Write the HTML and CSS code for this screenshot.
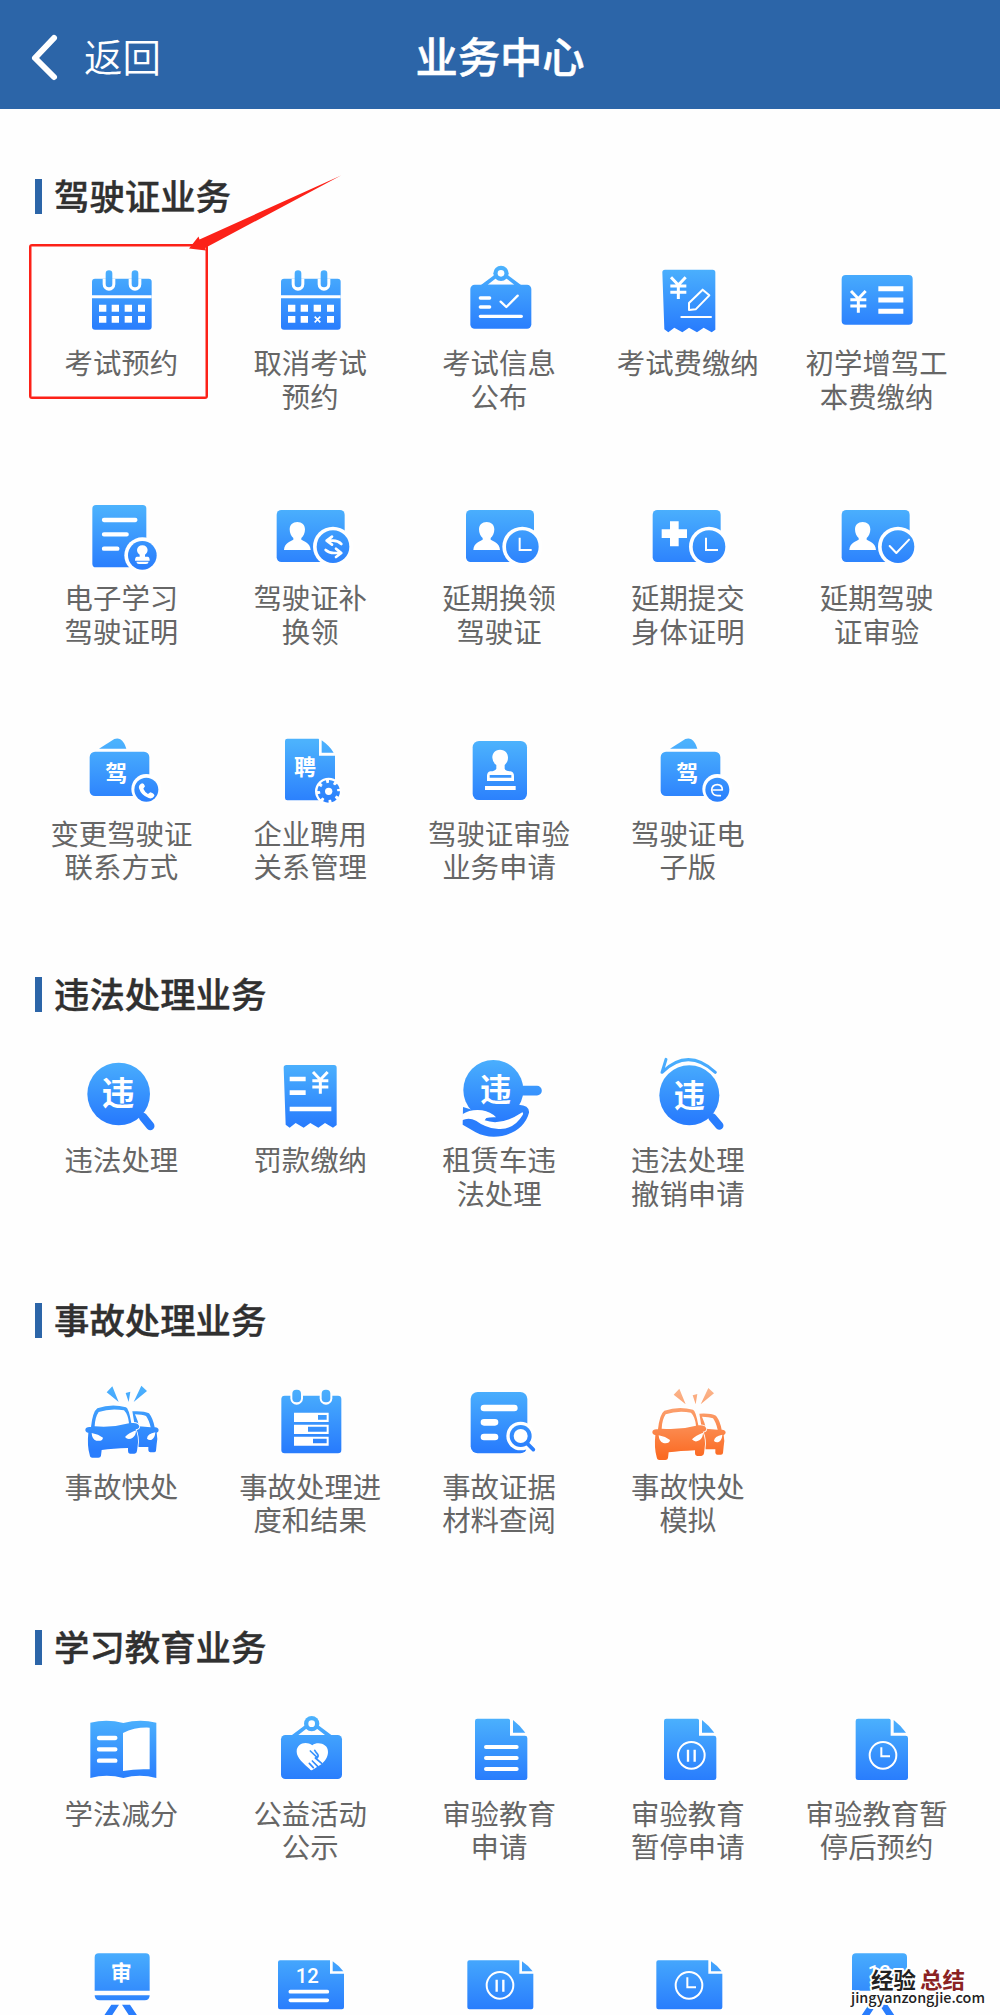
FILE: index.html
```html
<!DOCTYPE html>
<html lang="zh-CN">
<head>
<meta charset="utf-8">
<title>业务中心</title>
<link rel="stylesheet" href="styles.css">
</head>
<body>
<svg class="defs" aria-hidden="true">
  <defs>
    <linearGradient id="blue" gradientUnits="userSpaceOnUse" x1="0" y1="50" x2="0" y2="240">
      <stop offset="0" stop-color="#4cb2fd"/><stop offset="1" stop-color="#297dfd"/>
    </linearGradient>
    <linearGradient id="orange" gradientUnits="userSpaceOnUse" x1="0" y1="50" x2="0" y2="255">
      <stop offset="0" stop-color="#fbb58c"/><stop offset="1" stop-color="#fb6a22"/>
    </linearGradient>
    <g id="calendar">
      <rect x="97" y="87" width="179" height="153" rx="9"/>
      <path class="w" d="M97 137h179v9H97zM129 87h38v17a19 19 0 0 1-38 0zM207 87h38v17a19 19 0 0 1-38 0z"/>
      <rect x="138" y="62" width="20" height="51" rx="10"/><rect x="216" y="62" width="20" height="51" rx="10"/>
      <path class="w" d="M118 165h22v21h-22zM156 165h22v21h-22zM195 165h22v21h-22zM235 165h21v21h-21zM118 199h22v20h-22zM156 199h22v20h-22zM235 199h21v20h-21z"/>
    </g>
    <g id="board">
      <rect x="664" y="105" width="183" height="132" rx="13"/>
      <path d="M692 109l52-39h24l52 39zm24-4h80l-26-20h-28z" fill-rule="evenodd"/>
      <circle cx="756" cy="71" r="23"/><circle class="w" cx="756" cy="71" r="10"/>
    </g>
    <g id="person">
      <path class="w" d="M0-36c14 0 23 9 23 22 0 12-5 21-11 26v5c7 5 27 8 28 31h-80c1-23 21-26 28-31v-5c-6-5-11-14-11-26 0-13 9-22 23-22z"/>
    </g>
    <g id="yen"><path class="l" stroke-width="9" d="M-22-32l22 23 22-23M0-9v42M-24-6h48M-24 13h48"/></g>
    <g id="card">
      <rect x="0" y="62" width="204" height="156" rx="14"/>
      <circle class="w" cx="169" cy="172" r="60"/><path class="w" d="M130 219h60v12h-60z"/>
      <circle cx="169" cy="172" r="49"/>
    </g>
    <g id="wallet">
      <path d="M118 71l46-29q10-4 18 1 12 8 18 28z"/>
      <rect x="90" y="80" width="179" height="133" rx="16"/>
      <text x="170" y="169" font-size="66">驾</text>
      <circle class="w" cx="260" cy="192" r="45"/><circle cx="260" cy="194" r="36"/>
    </g>
    <g id="doc">
      <path d="M7 56H100q5 0 5 5v46h45q7 0 7 7V233q0 7-7 7H7q-7 0-7-7V63q0-7 7-7z"/>
      <path d="M114 60q22 17 37 38h-37z"/>
    </g>
    <g id="widedoc">
      <path d="M6 92H156v40h42V233q0 6-6 6H6q-6 0-6-6V98q0-6 6-6z"/><path d="M164 95q18 12 32 30h-32z"/>
    </g>
    <g id="easel">
      <path d="M0 183V83q0-12 12-12H153q12 0 12 12V183zM0 197H165q0 15-15 15H15Q0 212 0 197zM50 225H73L34 285H10zM82 225h24l40 60h-25z"/>
    </g>
    <g id="receipt"><path d="M0 68q0-8 8-8H151q8 0 8 8V240l-11 8-24-14-20 14-24-14-20 14-24-14-18 14-12-9z"/></g>
    <g id="crash">
      <path d="M158 50l-17 18 36 29zM198 70l14-4-5 31zM245 48l17 16-40 33z"/>
      <path fill-rule="evenodd" d="M218 125q35-2 50 6 12 15 17 42 10-1 12 8 0 6-6 8 4 20 0 34l-2 20q-1 5-6 5h-11q-5 0-6-6v-10h-30zM226 134q9 20 12 36l35 3q-5-22-14-34-12-5-33-5zM262 207q1-15 25-19-1 17-11 22-8 3-14-3z"/>
      <path class="wo" fill-rule="evenodd" d="M113 116q43-15 86-3 8 2 16 47 21-2 24 10 0 8-11 9 10 25 6 49l-2 16q-1 8-8 8h-13q-6 0-6-8v-9q-45 2-79 6l-2 17q-1 6-8 6H98q-7 0-8-9-8-27-4-66-9-1-9-9 1-10 17-8 5-46 19-56zM117 127q-11 16-12 43 52 5 103-9-3-27-15-39-41-7-76 5zM96 190q21 4 34 14-2 12-20 9-13-4-14-23zM196 202q11-12 33-20 0 16-11 23-13 8-22-3z"/>
    </g>
  </defs>
</svg>

<header class="nav">
  <a class="back"><svg viewBox="0 0 34 50"><path d="M27 6L8 26l19 19"/></svg><span>返回</span></a>
  <h1>业务中心</h1>
</header>

<main>
<section>
  <h2>驾驶证业务</h2>
  <div class="grid">
    <div class="item"><svg viewBox="34 -11 300 300"><use href="#calendar"/><path class="w" d="M195 199h22v20h-22z"/></svg><p>考试预约</p></div>
    <div class="item"><svg viewBox="34 -11 300 300"><use href="#calendar"/><path class="l" stroke-width="5" d="M198 201l17 17m0-17l-17 17"/></svg><p>取消考试<br>预约</p></div>
    <div class="item"><svg viewBox="600 -11 300 300"><use href="#board"/><path class="l r" stroke-width="10" d="M694 145h28M694 172h28M694 200h123"/><path class="l r" stroke-width="7" d="M755 156l17 16 34-34"/></svg><p>考试信息<br>公布</p></div>
    <div class="item"><svg viewBox="413 -11 300 300"><use href="#receipt" x="486"/><use href="#yen" x="534" y="115"/><path class="l r" stroke-width="6" d="M566 160l41-40 20 17-41 42-20 2zM543 202h89"/></svg><p>考试费缴纳</p></div>
    <div class="item"><svg viewBox="980 -11 300 300"><rect x="1024" y="76" width="213" height="149" rx="12"/><use href="#yen" x="1074" y="156"/><path class="l" stroke-width="15" d="M1134 117h75M1134 151h75M1134 185h75"/></svg><p>初学增驾工<br>本费缴纳</p></div>

    <div class="item"><svg viewBox="34 -25 300 300"><rect x="98" y="47" width="162" height="187" rx="11"/><path class="l r" stroke-width="13" d="M133 92h94M133 135h68M133 178h40"/><circle class="w" cx="248" cy="198" r="54"/><circle cx="248" cy="198" r="43"/><path class="w" d="M248 168c19 0 20 22 8 28v6h8q6 0 6 12h-44q0-12 6-12h8v-6c-12-6-11-28 8-28zM230 217h37q-1 7-8 7h-21q-7 0-8-7z"/></svg><p>电子学习<br>驾驶证明</p></div>
    <div class="item"><svg viewBox="601 -25 300 300"><use href="#card" x="651"/><use href="#person" x="713" y="134"/><path class="l r" stroke-width="8" d="M845 164q-10-10-25-10h-19M817 142l-16 12 16 12M798 182q10 9 25 9h20M829 178l16 13-16 12"/></svg><p>驾驶证补<br>换领</p></div>
    <div class="item"><svg viewBox="1167 -25 300 300"><use href="#card" x="1218"/><use href="#person" x="1280" y="134"/><path class="l" stroke-width="6" d="M1379 145v37h36"/></svg><p>延期换领<br>驾驶证</p></div>
    <div class="item"><svg viewBox="413 -25 300 300"><use href="#card" x="457"/><path class="w" d="M509 96h26v24h25v26h-25v25h-26v-25h-25v-26h25z"/><path class="l" stroke-width="6" d="M617 145v37h36"/></svg><p>延期提交<br>身体证明</p></div>
    <div class="item"><svg viewBox="980 -25 300 300"><use href="#card" x="1024"/><use href="#person" x="1087" y="134"/><path class="l r" stroke-width="6" d="M1168 170l20 21 38-40"/></svg><p>延期驾驶<br>证审验</p></div>

    <div class="item"><svg viewBox="34 -24 300 300"><use href="#wallet"/><path class="w" d="M244 176q8-4 12 8l-5 7q5 11 14 16l7-5q14 5 12 11-6 10-17 6-22-7-29-29-2-9 6-14z"/></svg><p>变更驾驶证<br>联系方式</p></div>
    <div class="item"><svg viewBox="601 -24 300 300"><path d="M683 41h93q2 0 2 3v48h48V220q0 6-7 6H683q-7 0-7-7V48q0-7 7-7zM786 46q23 16 36 37h-36z"/><text x="736" y="149" font-size="66">聘</text><circle class="w" cx="807" cy="199" r="41"/><circle cx="807" cy="199" r="26"/><circle class="ring b" cx="807" cy="199" r="28" stroke-dasharray="14 8"/><circle class="w" cx="807" cy="199" r="11"/></svg><p>企业聘用<br>关系管理</p></div>
    <div class="item"><svg viewBox="1167 -24 300 300"><rect x="1238" y="48" width="163" height="177" rx="19"/><path class="w" fill-rule="evenodd" d="M1320 74c17 0 24 12 24 24 0 13-7 18-10 22v11q2 7 17 8 11 2 11 14v15h-81v-15q0-12 10-14 15-1 18-8v-11q-11-7-12-22c0-12 7-24 23-24zM1289 150v8h65v-8zM1275 183h92v12h-92z"/></svg><p>驾驶证审验<br>业务申请</p></div>
    <div class="item"><svg viewBox="22 -24 300 300"><use href="#wallet"/><path class="l r" stroke-width="5" d="M248 195h27q0-16-15-16-16 0-17 16 2 17 18 17h8"/></svg><p>驾驶证电<br>子版</p></div>
  </div>
</section>

<section>
  <h2>违法处理业务</h2>
  <div class="grid">
    <div class="item"><svg viewBox="34 10 300 300"><circle cx="177" cy="163" r="94"/><path class="b r" stroke-width="25" d="M250 232l22 27"/><text x="175" y="197" font-size="98">违</text></svg><p>违法处理</p></div>
    <div class="item"><svg viewBox="601 10 300 300"><use href="#receipt" x="672" y="16"/><path class="l" stroke-width="14" d="M690 118h48M690 159h48M690 208h125"/><use href="#yen" x="782" y="129"/></svg><p>罚款缴纳</p></div>
    <div class="item"><svg viewBox="1167 11 300 300"><circle cx="1300" cy="152" r="90"/><path class="b r" stroke-width="29" d="M1385 154.010L1431 154"/><path d="M1209 203l32 10 110-8 25-9q33 2 31 24c-16 65-103 90-160 59l-39-23z"/><path class="w" d="M1207 225q24-16 59-12 26 4 42 21-17-1-29 2l-5 7q50 18 113-24 4 2 1 8-28 47-78 41-34-3-62-24-22-11-42-1z"/><text x="1307" y="186" font-size="94">违</text></svg><p>租赁车违<br>法处理</p></div>
    <div class="item"><svg viewBox="1733 11 300 300"><circle cx="1887" cy="168" r="90"/><path class="b r" stroke-width="25" d="M1956 234l21 25"/><path class="b r" stroke-width="9" d="M1817 60l-12 39q78-76 160 0"/><text x="1887" y="203" font-size="94">违</text></svg><p>违法处理<br>撤销申请</p></div>
  </div>
</section>

<section>
  <h2>事故处理业务</h2>
  <div class="grid">
    <div class="item"><svg viewBox="34 1 300 300"><use href="#crash"/></svg><p>事故快处</p></div>
    <div class="item"><svg viewBox="601 1 300 300"><rect x="665" y="78" width="180" height="173" rx="10"/><rect class="w" x="692" y="60" width="38" height="45" rx="19"/><rect class="w" x="780" y="60" width="38" height="45" rx="19"/><rect x="698" y="60" width="26" height="38" rx="12"/><rect x="786" y="60" width="26" height="38" rx="12"/><path class="w" fill-rule="evenodd" d="M703 129h104v28H703zM775 136v14h26v-14zM703 165h104v28H703zM745 171v15h56v-15zM703 201h104v27H703zM760 207v14h41v-14z"/></svg><p>事故处理进<br>度和结果</p></div>
    <div class="item"><svg viewBox="1167 1 300 300"><rect x="1232" y="67" width="170" height="184" rx="21"/><path class="l r" stroke-width="20" d="M1272 115h91M1272 158h33M1272 202h33"/><path class="l r" stroke-width="26" d="M1397 220l20 20"/><circle class="w" cx="1382" cy="199" r="43"/><circle cx="1382" cy="199" r="33"/><circle class="w" cx="1382" cy="199" r="21"/><path class="b r" stroke-width="11" d="M1402 222l18 18"/></svg><p>事故证据<br>材料查阅</p></div>
    <div class="item"><svg class="warm" viewBox="34 -6 300 300"><use href="#crash"/></svg><p>事故快处<br>模拟</p></div>
  </div>
</section>

<section>
  <h2>学习教育业务</h2>
  <div class="grid">
    <div class="item"><svg viewBox="34 -9 300 300"><path d="M92 68q50-12 99 1 50-13 99-1v166q-50-14-99 0-50-14-99 0z"/><path class="w" d="M190 99q36-18 80-16v125q-42-2-80 5z"/><path class="l r" stroke-width="13" d="M118 114h49M118 148h49M118 182h49"/></svg><p>学法减分</p></div>
    <div class="item"><svg viewBox="601 -9 300 300"><use href="#board"/><path class="w" d="M758 136c15-12 47-6 47 20 0 15-9 27-19 36l-28 18q-5 2-8-3c-18-17-39-33-39-52 0-24 27-33 47-19z"/><path class="b r" stroke-width="5" d="M752 153l21 20q6-6-3-15l-5-7M767 174l19 16M758 183l16 16M749 190l12 13"/></svg><p>公益活动<br>公示</p></div>
    <div class="item"><svg viewBox="1167 -9 300 300"><use href="#doc" x="1245"/><path class="l r" stroke-width="12" d="M1278 141h92M1278 174h92M1278 207h92"/></svg><p>审验教育<br>申请</p></div>
    <div class="item"><svg viewBox="413 -9 300 300"><use href="#doc" x="491"/><circle class="ring" cx="573" cy="166" r="40"/><path class="l" stroke-width="7" d="M563 149v36M583 149v36"/></svg><p>审验教育<br>暂停申请</p></div>
    <div class="item"><svg viewBox="980 -9 300 300"><use href="#doc" x="1066"/><circle class="ring" cx="1148" cy="166" r="40"/><path class="l" stroke-width="6" d="M1143 142v27h26"/></svg><p>审验教育暂<br>停后预约</p></div>

    <div class="item"><svg viewBox="34 7 300 300"><use href="#easel" x="105"/><text x="185" y="152" font-size="63">审</text></svg></div>
    <div class="item"><svg viewBox="601 7 300 300"><use href="#widedoc" x="655"/><text class="num" x="743" y="161" font-size="61">12</text><path class="l r" stroke-width="11" d="M692 186h111M692 212h111"/></svg></div>
    <div class="item"><svg viewBox="1167 7 300 300"><use href="#widedoc" x="1222"/><circle class="ring" cx="1320" cy="167" r="40"/><path class="l" stroke-width="7" d="M1310 150v36M1330 150v36"/></svg></div>
    <div class="item"><svg viewBox="413 7 300 300"><use href="#widedoc" x="468"/><circle class="ring" cx="566" cy="167" r="40"/><path class="l" stroke-width="6" d="M561 143v30h26"/></svg></div>
    <div class="item"><svg viewBox="980 7 300 300"><use href="#easel" x="1055"/><text class="num" x="1137" y="151" font-size="61">12</text></svg></div>
  </div>
</section>
</main>

<div class="highlight"></div>
<svg class="arrow" viewBox="185 172 160 80"><path d="M341 175.500L205 248l1 2.500L189 248.500l9.500-12 1 3z"/></svg>
<svg class="mark" viewBox="0 0 140 56">
  <text x="21" y="29" font-size="22" textLength="45" lengthAdjust="spacingAndGlyphs">经验</text>
  <text class="red" x="70" y="29" font-size="22" textLength="45" lengthAdjust="spacingAndGlyphs">总结</text>
  <text class="site" x="1" y="44" font-size="14.500" textLength="134" lengthAdjust="spacingAndGlyphs">jingyanzongjie.com</text>
</svg>
</body>
</html>
```
FILE: styles.css
```css
* { box-sizing: border-box; }
body {
  margin: 0;
  position: relative;
  height: 2015px;
  overflow: hidden;
  background: #fefefe;
  font-family: "Noto Sans CJK SC", sans-serif;
}
.defs { display: block; width: 0; height: 0; }

.nav {
  height: 109px;
  padding: 0 28px;
  display: grid;
  grid-template-columns: 1fr auto 1fr;
  align-items: center;
  background: #2c65a8;
  color: #fff;
}
.nav h1 { margin: 0; font-size: 42.300px; font-weight: 500; line-height: 60px; -webkit-text-stroke: .5px #fff; }
.back { display: flex; align-items: center; gap: 23px; font-size: 38.500px; font-weight: 350; line-height: 60px; margin-left: -1px; }
.back svg { width: 34px; height: 50px; margin-top: 5px; fill: none; stroke: #fff; stroke-width: 6; stroke-linecap: round; stroke-linejoin: round; }

main { padding: 45.800px 29px 0 27px; }
h2 {
  margin: 0;
  height: 91.400px;
  padding: 0 0 8px 8px;
  display: flex;
  align-items: center;
  gap: 12px;
  color: #303030;
  font-size: 35.400px;
  font-weight: 500;
  line-height: 46px;
  -webkit-text-stroke: .4px #303030;
}
h2::before { content: ""; width: 7px; height: 35px; margin-top: 2px; margin-bottom: -1px; background: #2c65a8; }
h2 { padding-bottom: 10px; }
.grid { display: grid; grid-template-columns: repeat(5, 1fr); grid-auto-rows: 235.300px; }
.item { text-align: center; }
.item svg { display: block; width: 100px; height: 100px; margin: 0 auto; fill: url(#blue); }
.item svg.warm { fill: url(#orange); }
.item p { margin: -1.200px 0 0; color: #666; font-size: 28.400px; line-height: 33.500px; white-space: nowrap; font-weight: 400; }

.w, .item .w { fill: #fff; }
.wo { stroke: #fff; stroke-width: 5; paint-order: stroke; }
.l { fill: none; stroke: #fff; }
.r { stroke-linecap: round; stroke-linejoin: round; }
.b { fill: none; stroke: url(#blue); }
.ring { fill: none; stroke: #fff; stroke-width: 6; }
.ring.b { stroke: url(#blue); stroke-width: 12; }
text { fill: #fff; font-weight: 700; text-anchor: middle; }
.num { font-family: Roboto, sans-serif; font-weight: 500; }

.highlight {
  position: absolute;
  left: 29px;
  top: 244px;
  width: 179px;
  height: 155px;
  border: 2.500px solid #fc2118;
  box-shadow: inset 0 0 0 .5px #fc2118;
  border-radius: 3px;
}
.arrow { position: absolute; left: 185px; top: 172px; width: 160px; height: 80px; fill: #fc2118; }
.mark { position: absolute; left: 850px; top: 1959px; width: 140px; height: 56px; }
.mark text {
  fill: #222;
  font-weight: 700;
  text-anchor: start;
  stroke: #fff;
  stroke-width: 4;
  stroke-linejoin: round;
  paint-order: stroke;
}
.mark .red { fill: #8b2323; }
.mark .site { font-weight: 500; }
```
